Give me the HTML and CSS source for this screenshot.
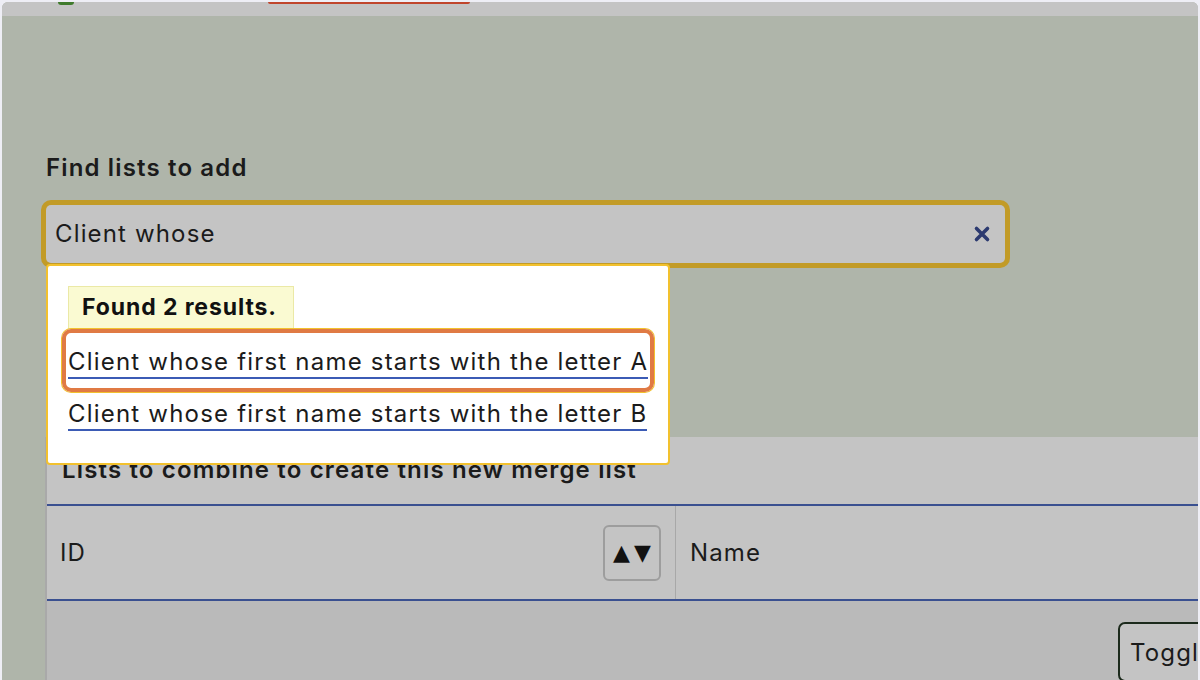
FILE: index.html
```html
<!DOCTYPE html>
<html lang="en">
<head>
<meta charset="utf-8">
<title>Find lists to add</title>
<link rel="stylesheet" href="styles.css">
</head>
<body>
<div class="window">
  <div class="topbar">
    <span class="topbar-green"></span>
    <span class="topbar-red"></span>
  </div>
  <main class="content">
    <label class="field-label" for="find">Find lists to add</label>
    <div class="combo">
      <div class="search">
        <span class="search-text" id="find">Client whose</span>
        <button class="clear" aria-label="Clear">
          <svg width="18" height="18" viewBox="0 0 18 18"><path d="M3.5 3.5 L14.5 14.5 M14.5 3.5 L3.5 14.5" stroke="#2c3a70" stroke-width="3.6" stroke-linecap="round" fill="none"/></svg>
        </button>
      </div>
      <div class="dropdown">
        <div class="status">Found 2 results.</div>
        <ul class="results">
          <li><a class="result is-focused" href="#">Client whose first name starts with the letter A</a></li>
          <li><a class="result" href="#">Client whose first name starts with the letter B</a></li>
        </ul>
      </div>
    </div>
    <section class="panel">
      <h2 class="panel-title">Lists to combine to create this new merge list</h2>
      <div class="table-head">
        <div class="th th-id">
          <span>ID</span>
          <button class="sort" aria-label="Sort">▲▼</button>
        </div>
        <div class="th th-name">Name</div>
      </div>
      <div class="table-foot">
        <button class="toggle">Toggle</button>
      </div>
    </section>
  </main>
</div>
</body>
</html>
```

FILE: styles.css
```css
* { box-sizing: border-box; }

html, body {
  margin: 0;
  padding: 0;
  height: 100%;
}

body {
  background: #eeeef5;
  font-family: Inter, "Noto Sans", "Liberation Sans", sans-serif;
  color: #1b1b1b;
  overflow: hidden;
  letter-spacing: 1.15px;
}

.window {
  margin: 2px 2px 0 2px;
  height: 678px;
  border-radius: 6px 6px 0 0;
  overflow: hidden;
  background: #afb5aa;
  display: flex;
  flex-direction: column;
}

.topbar {
  height: 14px;
  flex: none;
  background: #c4c4c4;
  display: flex;
  align-items: flex-start;
}

.topbar-green {
  width: 16px;
  height: 3px;
  margin-left: 56px;
  background: #3f7a2c;
  border-radius: 0 0 8px 8px;
}

.topbar-red {
  width: 202px;
  height: 2px;
  margin-left: 194px;
  background: #c0452c;
  border-radius: 0 0 2px 2px;
}

.content {
  flex: 1;
  padding: 137px 0 0 44px;
  display: flex;
  flex-direction: column;
  align-items: flex-start;
}

.field-label {
  font-size: 24px;
  font-weight: 600;
  line-height: 30px;
  margin: 0 0 22px 0;
  color: #1b1b1b;
}

.combo {
  position: relative;
  width: 959px;
}

.search {
  height: 58px;
  background: #c4c4c4;
  border-radius: 5px;
  box-shadow: 0 0 0 5px #c29b27;
  display: flex;
  align-items: center;
  padding: 0 14px 0 9px;
}

.search-text {
  flex: 1;
  font-size: 24px;
  line-height: 30px;
  color: #1b1b1b;
}

.clear {
  border: 0;
  background: none;
  padding: 0;
  width: 18px;
  height: 18px;
  display: flex;
}

.dropdown {
  position: absolute;
  left: 0;
  top: 59px;
  width: 624px;
  height: 201px;
  background: #fff;
  border: 2px solid #f2c12e;
  border-radius: 4px;
  padding: 20px 20px 0 20px;
  z-index: 5;
}

.status {
  display: inline-block;
  height: 43px;
  padding: 0 16px 0 13px;
  background: #fafad2;
  border: 1px solid #ebe9a6;
  font-size: 23px;
  font-weight: 700;
  line-height: 41px;
  letter-spacing: 0.9px;
  color: #111;
}

.results {
  list-style: none;
  margin: 0;
  padding: 0;
}

.results li {
  height: 53px;
  display: flex;
  align-items: flex-start;
}

.result {
  display: inline-block;
  margin-top: 18px;
  font-size: 24px;
  line-height: 30px;
  letter-spacing: 1.2px;
  color: #1b1b1b;
  text-decoration: none;
  border-bottom: 2px solid #3b5bb5;
  position: relative;
  white-space: nowrap;
}

.results li:first-child { height: 52px; }

.result.is-focused::after {
  content: "";
  position: absolute;
  left: -6px;
  right: -6px;
  top: -18px;
  bottom: -15px;
  border: 4px solid #e07a44;
  border-radius: 9px;
  box-shadow: 0 0 0 1px #f2c12e;
}

.panel {
  margin-top: 174px;
  margin-left: -1px;
  width: 1160px;
  flex: 1;
  background: #c4c4c4;
  border-left: 2px solid #a9a9a9;
  display: flex;
  flex-direction: column;
}

.panel-title {
  margin: 0;
  height: 67px;
  padding: 18px 0 0 15px;
  font-size: 24px;
  font-weight: 600;
  line-height: 30px;
  color: #1b1b1b;
}

.table-head {
  height: 97px;
  border-top: 2px solid #3a5090;
  border-bottom: 2px solid #3a5090;
  display: flex;
}

.th {
  display: flex;
  align-items: center;
  font-size: 24px;
  line-height: 30px;
  color: #1b1b1b;
}

.th-id {
  width: 629px;
  padding: 0 14px 0 13px;
  justify-content: space-between;
  border-right: 1px solid #a8a8a8;
}

.sort {
  width: 58px;
  height: 56px;
  border: 2px solid #9d9d9d;
  border-radius: 6px;
  background: #c4c4c4;
  font-family: "DejaVu Sans", sans-serif;
  font-size: 22px;
  line-height: 1;
  color: #111;
  padding: 0 0 0 4px;
  letter-spacing: 4px;
}

.th-name {
  padding-left: 14px;
  flex: 1;
}

.table-foot {
  flex: 1;
  background: #bababa;
  display: flex;
  justify-content: flex-start;
  padding: 21px 0 0 1071px;
}

.toggle {
  height: 60px;
  border: 2px solid #1c2a1c;
  border-radius: 7px;
  background: #c4c4c4;
  font-family: Inter, "Noto Sans", sans-serif;
  font-size: 24px;
  letter-spacing: 1.15px;
  color: #1b1b1b;
  padding: 0 10px;
  white-space: nowrap;
}
```
